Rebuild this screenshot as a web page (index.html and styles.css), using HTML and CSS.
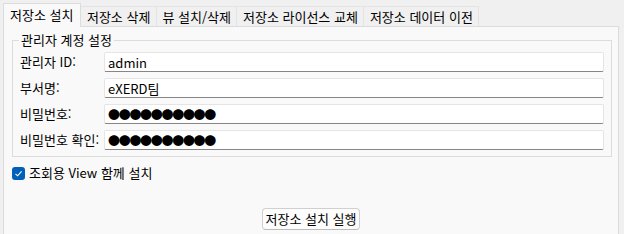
FILE: index.html
```html
<!DOCTYPE html>
<html lang="ko">
<head>
    <meta charset="UTF-8">
    <title>저장소 설치</title>
    <link rel="stylesheet" href="styles.css">
</head>
<body>
    <div class="tabs">
        <div class="tab active">저장소 설치</div>
        <div class="tab">저장소 삭제</div>
        <div class="tab">뷰 설치/삭제</div>
        <div class="tab">저장소 라이선스 교체</div>
        <div class="tab">저장소 데이터 이전</div>
    </div>
    <div class="panel">
        <fieldset class="group">
            <legend>관리자 계정 설정</legend>
            <div class="form">
                <label>관리자 ID:</label>
                <input class="field" type="text" value="admin" readonly>
                <label>부서명:</label>
                <input class="field" type="text" value="eXERD팀" readonly>
                <label>비밀번호:</label>
                <input class="field secret" type="text" value="●●●●●●●●●●" readonly>
                <label>비밀번호 확인:</label>
                <input class="field secret" type="text" value="●●●●●●●●●●" readonly>
            </div>
        </fieldset>
        <label class="check">
            <span class="box">
                <svg width="9" height="9" viewBox="0 0 9 9"><path d="M1.5 4.8 L3.6 6.8 L7.6 2.4" fill="none" stroke="#fff" stroke-width="1.1"/></svg>
            </span>
            조회용 View 함께 설치
        </label>
        <div class="actions">
            <button class="btn">저장소 설치 실행</button>
        </div>
    </div>
</body>
</html>
```

FILE: styles.css
```css
html, body {
    height: 100%;
}
body {
    margin: 0;
    padding: 3px 5px 0 3px;
    box-sizing: border-box;
    background: #f0f0f0;
    color: #000;
    font-family: "Noto Sans CJK KR", "Noto Sans", sans-serif;
    font-size: 13px;
    line-height: 16px;
    overflow: hidden;
}
.tabs {
    display: flex;
    align-items: flex-end;
    height: 23px;
}
.tab {
    height: 19px;
    line-height: 19px;
    padding: 0 5.5px;
    border: 1px solid #e3e3e3;
    border-bottom: none;
    margin-left: -1px;
    background: #f0f0f0;
}
.tab.active {
    position: relative;
    z-index: 1;
    height: 23px;
    line-height: 22px;
    padding: 0 7px 0 6px;
    margin-left: 0;
    margin-bottom: -1px;
    border-color: #dcdcdc;
    background: #f9f9f9;
}
.panel {
    height: 214px;
    border: 1px solid #dcdcdc;
    background: #f9f9f9;
}
.group {
    margin: 5px 6px 0 8px;
    padding: 4px 7px 6px 7px;
    border: 1px solid #dcdcdc;
}
.group legend {
    padding: 0 2px;
    margin-left: -1px;
}
.form {
    display: grid;
    grid-template-columns: 84px 1fr;
    row-gap: 6px;
    align-items: center;
}
.field {
    box-sizing: border-box;
    height: 20px;
    margin: 0;
    padding: 0 3px;
    border: 1px solid #e5e5e5;
    border-bottom-color: #868686;
    border-radius: 2px;
    background: #fff;
    font: inherit;
    color: #000;
    outline: none;
}
.field.secret {
    font-size: 12px;
    letter-spacing: -1.3px;
}
.check {
    display: flex;
    align-items: center;
    gap: 4px;
    margin: 8px 0 0 8px;
}
.box {
    display: flex;
    align-items: center;
    justify-content: center;
    width: 13px;
    height: 13px;
    border-radius: 3px;
    background: #005fb8;
}
.actions {
    display: flex;
    justify-content: center;
    margin-top: 27px;
}
.btn {
    height: 22px;
    padding: 0 2px;
    border: 1px solid #d0d0d0;
    border-bottom-color: #bcbcbc;
    border-radius: 4px;
    background: #fdfdfd;
    font: inherit;
    color: #000;
}
```
